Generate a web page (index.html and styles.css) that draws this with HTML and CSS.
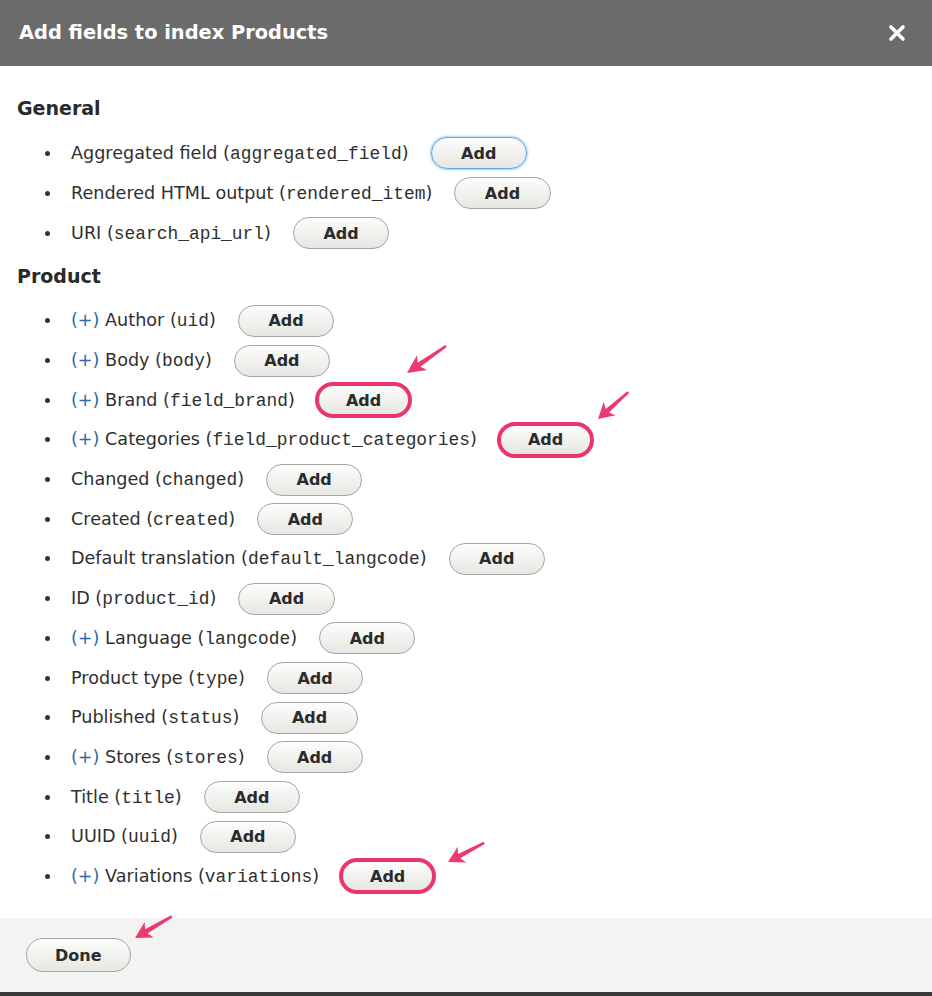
FILE: index.html
```html
<!DOCTYPE html>
<html>
<head>
<meta charset="utf-8">
<title>Add fields to index Products</title>
<link rel="stylesheet" href="styles.css">
</head>
<body>
<div class="dialog">
  <header class="titlebar">
    <h1 class="title">Add fields to index Products</h1>
    <button class="close" aria-label="Close">
      <svg width="18" height="18" viewBox="0 0 18 18"><path d="M3 3 L15 15 M15 3 L3 15" stroke="#fff" stroke-width="3.6" stroke-linecap="round"/></svg>
    </button>
  </header>

  <div class="content">
    <h2 class="group">General</h2>
    <ul class="fields">
      <li><span class="label">Aggregated field (<code>aggregated_field</code>)</span><button class="btn focus">Add</button></li>
      <li><span class="label">Rendered HTML output (<code>rendered_item</code>)</span><button class="btn">Add</button></li>
      <li><span class="label">URI (<code>search_api_url</code>)</span><button class="btn">Add</button></li>
    </ul>

    <h2 class="group">Product</h2>
    <ul class="fields product">
      <li><span class="label"><a class="expand">(+)</a> Author (<code>uid</code>)</span><button class="btn">Add</button></li>
      <li><span class="label"><a class="expand">(+)</a> Body (<code>body</code>)</span><button class="btn">Add</button></li>
      <li><span class="label"><a class="expand">(+)</a> Brand (<code>field_brand</code>)</span><button class="btn mark">Add</button></li>
      <li><span class="label"><a class="expand">(+)</a> Categories (<code>field_product_categories</code>)</span><button class="btn mark">Add</button></li>
      <li><span class="label">Changed (<code>changed</code>)</span><button class="btn">Add</button></li>
      <li><span class="label">Created (<code>created</code>)</span><button class="btn">Add</button></li>
      <li><span class="label">Default translation (<code>default_langcode</code>)</span><button class="btn">Add</button></li>
      <li><span class="label">ID (<code>product_id</code>)</span><button class="btn">Add</button></li>
      <li><span class="label"><a class="expand">(+)</a> Language (<code>langcode</code>)</span><button class="btn">Add</button></li>
      <li><span class="label">Product type (<code>type</code>)</span><button class="btn">Add</button></li>
      <li><span class="label">Published (<code>status</code>)</span><button class="btn">Add</button></li>
      <li><span class="label"><a class="expand">(+)</a> Stores (<code>stores</code>)</span><button class="btn">Add</button></li>
      <li><span class="label">Title (<code>title</code>)</span><button class="btn">Add</button></li>
      <li><span class="label">UUID (<code>uuid</code>)</span><button class="btn">Add</button></li>
      <li><span class="label"><a class="expand">(+)</a> Variations (<code>variations</code>)</span><button class="btn mark">Add</button></li>
    </ul>
  </div>

  <div class="footer">
    <button class="btn done">Done</button>
  </div>
  <div class="bottombar"></div>

  <svg class="annotations" width="932" height="996" viewBox="0 0 932 996">
    <defs>
      <g id="arrow">
        <path d="M0 0 L17 -9 L13.5 -2.4 L44 -1.3 L44 1.3 L13.5 2.4 L17 9 Z" fill="#ec3a6f"/>
      </g>
    </defs>
    <g transform="translate(407 373) rotate(-34.7) scale(1.08 1)"><use href="#arrow"/></g>
    <g transform="translate(598 419) rotate(-41.6) scale(0.92 1)"><use href="#arrow"/></g>
    <g transform="translate(448 862) rotate(-28) scale(0.93 1)"><use href="#arrow"/></g>
    <g transform="translate(135 938) rotate(-30.5) scale(0.97 1)"><use href="#arrow"/></g>
  </svg>
</div>
</body>
</html>
```

FILE: styles.css
```css
html, body {
  margin: 0;
  padding: 0;
  background: #ffffff;
}

.dialog {
  position: relative;
  width: 932px;
  height: 996px;
  display: flex;
  flex-direction: column;
  font-family: "DejaVu Sans", "Open Sans", sans-serif;
  color: #2f2f2f;
  overflow: hidden;
}

.titlebar {
  height: 66px;
  flex: none;
  background: #6b6b6b;
  display: flex;
  align-items: center;
  justify-content: space-between;
  padding: 0 26px 0 19px;
  box-sizing: border-box;
}

.title {
  margin: 0 0 1px;
  font-size: 19.4px;
  font-weight: 700;
  color: #ffffff;
}

.close {
  border: 0;
  background: none;
  padding: 0;
  width: 18px;
  height: 18px;
  display: flex;
  cursor: pointer;
}

.content {
  flex: 1;
  padding: 28px 17px 0;
}

.group {
  margin: 0;
  font-size: 19px;
  font-weight: 700;
  line-height: 28px;
  color: #2a2a2a;
}

.fields {
  list-style: none;
  margin: 11px 0 9px;
  padding: 0 0 0 28px;
}

.fields.product {
  margin-bottom: 0;
}

.fields li {
  height: 40px;
  display: flex;
  align-items: center;
  font-size: 17.6px;
}

.fields.product li {
  height: 39.7px;
}

.fields li::before {
  content: "";
  width: 5px;
  height: 5px;
  border-radius: 50%;
  background: #333;
  margin-right: 21px;
  flex: none;
}

.label {
  white-space: nowrap;
  margin-right: 22px;
}

.label code {
  font-family: "Liberation Mono", monospace;
  font-size: 17.9px;
  color: #2f2f2f;
}

.expand {
  color: #2f6aa8;
  text-decoration: none;
}

.btn {
  height: 32px;
  padding: 0 29.5px;
  border: 1px solid #a5a5a5;
  border-radius: 17px;
  background: linear-gradient(#fdfdfd, #efefec 60%, #e6e6e2);
  font-family: "DejaVu Sans", "Open Sans", sans-serif;
  font-size: 16px;
  font-weight: 700;
  color: #2b2b2b;
  box-sizing: border-box;
  cursor: pointer;
  flex: none;
}

.btn.focus {
  border-color: #5ea6e8;
  box-shadow: 0 0 2px 1px rgba(110, 175, 235, 0.6);
}

.btn.mark {
  height: 36px;
  padding: 0 27px;
  border: 4px solid #ea356b;
  border-radius: 19px;
  margin-left: -2px;
}

.footer {
  flex: none;
  height: 74px;
  margin-top: 21px;
  background: #f3f3f2;
  display: flex;
  align-items: center;
  padding-left: 26px;
}

.btn.done {
  height: 34px;
  padding: 0 28px;
}

.bottombar {
  flex: none;
  height: 4px;
  background: #3a3a3a;
}

.annotations {
  position: absolute;
  top: 0;
  left: 0;
  pointer-events: none;
}
```
